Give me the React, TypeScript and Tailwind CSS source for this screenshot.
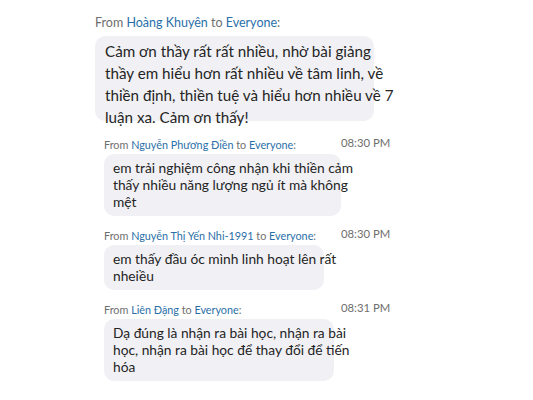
const font = { fontFamily: 'Lato, "Open Sans", sans-serif' };

type Msg = {
  from: string;
  time: string;
  lines: string[];
  width: string;
};

const messages: Msg[] = [
  {
    from: "Nguyễn Phương Điền",
    time: "08:30 PM",
    lines: ["em trải nghiệm công nhận khi thiền cảm", "thấy nhiều năng lượng ngủ ít mà không", "mệt"],
    width: "w-[237px]",
  },
  {
    from: "Nguyễn Thị Yến Nhi-1991",
    time: "08:30 PM",
    lines: ["em thấy đầu óc mình linh hoạt lên rất", "nheiều"],
    width: "w-[220px]",
  },
  {
    from: "Liên Đặng",
    time: "08:31 PM",
    lines: ["Dạ đúng là nhận ra bài học, nhận ra bài", "học, nhận ra bài học để thay đổi để tiến", "hóa"],
    width: "w-[230px]",
  },
];

const Header = ({ name, big }: { name: string; big?: boolean }) => (
  <span className={`${big ? "text-[12.5px]" : "text-[10.8px]"} text-[#6e6e6e] whitespace-nowrap`}>
    From <span className="text-[#2a6fa8]">{name}</span> to{" "}
    <span className="text-[#2a6fa8]">Everyone</span>:
  </span>
);

export default function App() {
  return (
    <div className="w-[533px] h-[400px] bg-white overflow-hidden" style={font}>
      <div className="pl-[95px] pt-[13px]">
        <div className="h-[16px] leading-[16px]">
          <Header name="Hoàng Khuyên" big />
        </div>
        <div className="mt-[7px] w-[279px] h-[85px] rounded-[10px] bg-[#f1f1f5] px-[10px] pt-[4px] text-[15.2px] leading-[22px] text-[#242424] whitespace-nowrap">
          Cảm ơn thầy rất rất nhiều, nhờ bài giảng
          <br />
          thầy em hiểu hơn rất nhiều về tâm linh, về
          <br />
          thiền định, thiền tuệ và hiểu hơn nhiều về 7
          <br />
          luận xa. Cảm ơn thấy!
        </div>
      </div>

      <div className="pl-[104px] pt-[14px] flex flex-col gap-[10px]">
        {messages.map((m, i) => (
          <div key={i}>
            <div className="flex h-[16px] leading-[16px]">
              <div className="w-[237px]">
                <Header name={m.from} />
              </div>
              <span className="text-[11.3px] text-[#6e6e6e]">{m.time}</span>
            </div>
            <div
              className={`mt-[3px] ${m.width} rounded-[10px] bg-[#f1f1f5] px-[9px] pt-[5px] pb-[6px] text-[13.75px] leading-[17px] text-[#242424] whitespace-nowrap`}
            >
              {m.lines.map((l, j) => (
                <div key={j}>{l}</div>
              ))}
            </div>
          </div>
        ))}
      </div>
    </div>
  );
}
